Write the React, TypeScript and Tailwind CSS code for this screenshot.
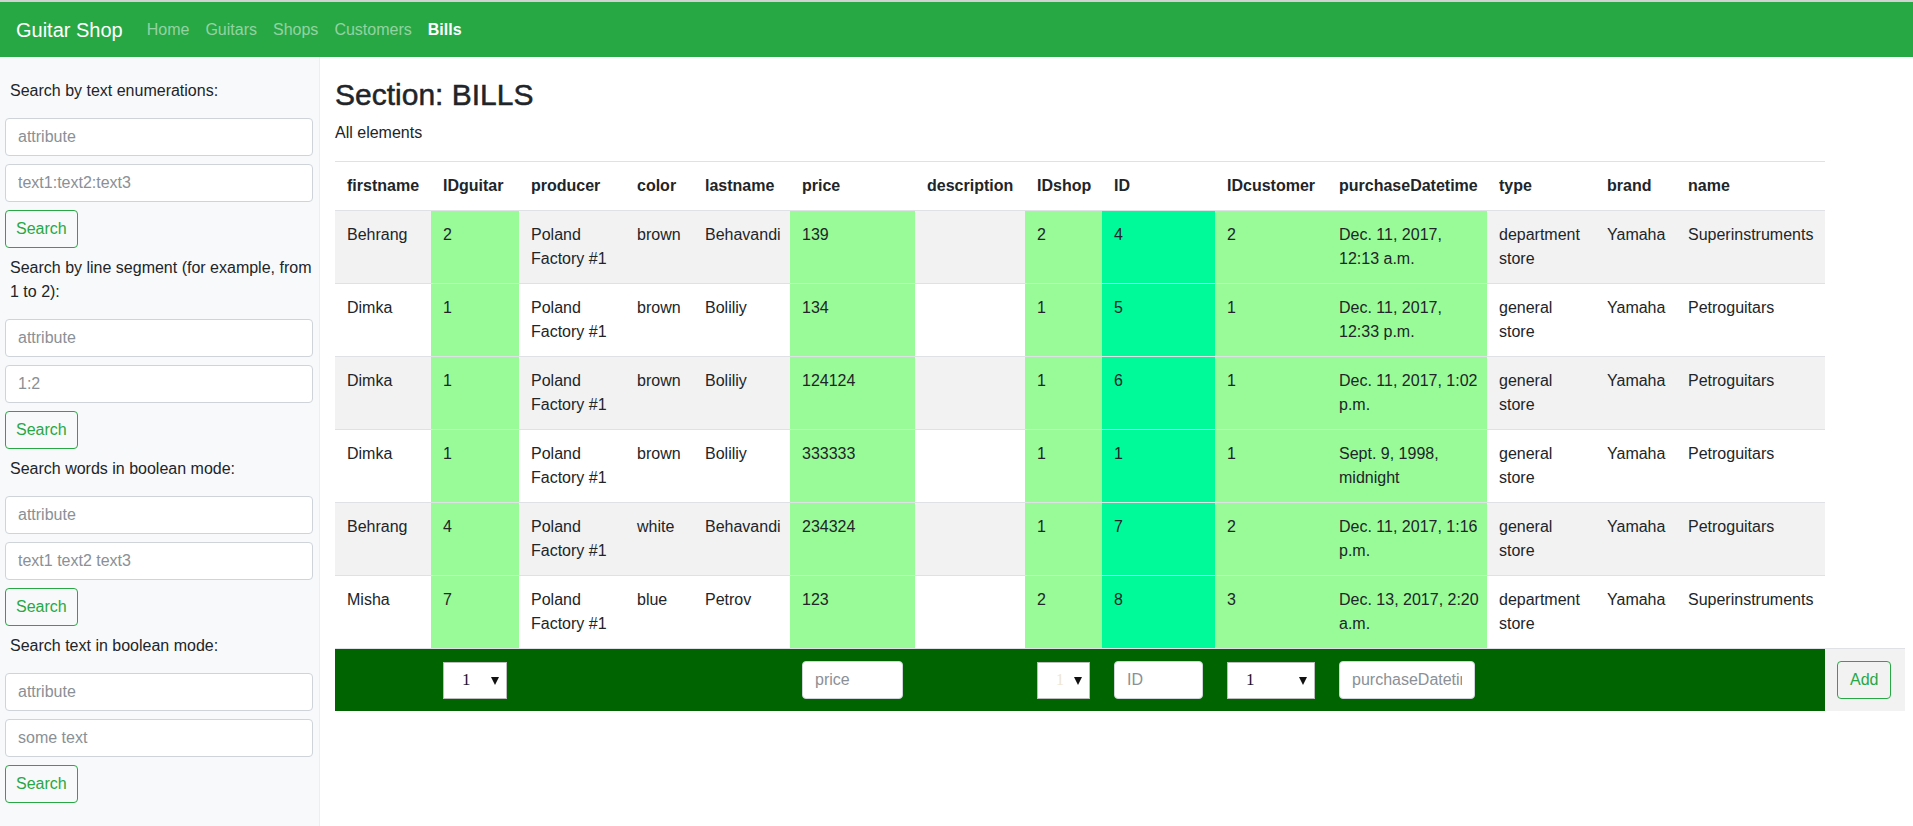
import React from "react";

const headers = [
  "firstname",
  "IDguitar",
  "producer",
  "color",
  "lastname",
  "price",
  "description",
  "IDshop",
  "ID",
  "IDcustomer",
  "purchaseDatetime",
  "type",
  "brand",
  "name",
];

const colWidths = [96, 88, 106, 68, 97, 125, 110, 77, 113, 112, 160, 108, 81, 149, 80];

const cellBg: Record<number, string> = {
  1: "bg-[#98fb98]",
  5: "bg-[#98fb98]",
  7: "bg-[#98fb98]",
  8: "bg-[#00fa9a]",
  9: "bg-[#98fb98]",
  10: "bg-[#98fb98]",
};

type Cell = string[];

const rows: Cell[][] = [
  [["Behrang"], ["2"], ["Poland", "Factory #1"], ["brown"], ["Behavandi"], ["139"], [], ["2"], ["4"], ["2"], ["Dec. 11, 2017,", "12:13 a.m."], ["department", "store"], ["Yamaha"], ["Superinstruments"]],
  [["Dimka"], ["1"], ["Poland", "Factory #1"], ["brown"], ["Boliliy"], ["134"], [], ["1"], ["5"], ["1"], ["Dec. 11, 2017,", "12:33 p.m."], ["general", "store"], ["Yamaha"], ["Petroguitars"]],
  [["Dimka"], ["1"], ["Poland", "Factory #1"], ["brown"], ["Boliliy"], ["124124"], [], ["1"], ["6"], ["1"], ["Dec. 11, 2017, 1:02", "p.m."], ["general", "store"], ["Yamaha"], ["Petroguitars"]],
  [["Dimka"], ["1"], ["Poland", "Factory #1"], ["brown"], ["Boliliy"], ["333333"], [], ["1"], ["1"], ["1"], ["Sept. 9, 1998,", "midnight"], ["general", "store"], ["Yamaha"], ["Petroguitars"]],
  [["Behrang"], ["4"], ["Poland", "Factory #1"], ["white"], ["Behavandi"], ["234324"], [], ["1"], ["7"], ["2"], ["Dec. 11, 2017, 1:16", "p.m."], ["general", "store"], ["Yamaha"], ["Petroguitars"]],
  [["Misha"], ["7"], ["Poland", "Factory #1"], ["blue"], ["Petrov"], ["123"], [], ["2"], ["8"], ["3"], ["Dec. 13, 2017, 2:20", "a.m."], ["department", "store"], ["Yamaha"], ["Superinstruments"]],
];

function SideInput({ placeholder }: { placeholder: string }) {
  return (
    <input
      placeholder={placeholder}
      className="block w-full h-[38px] mb-2 rounded-[4px] border border-[#ced4da] bg-white px-3 text-[16px] leading-6 text-[#495057] placeholder:text-[#8a9096] outline-none"
    />
  );
}

function SearchButton() {
  return (
    <button className="block h-[38px] mb-2 px-[10px] rounded-[4px] border border-[#28a745] text-[#28a745] text-[16px] leading-6 bg-transparent">
      Search
    </button>
  );
}

function Arrow() {
  return (
    <svg width="8" height="9" viewBox="0 0 8 9" className="shrink-0">
      <polygon points="0,1 8,1 4,9" fill="#111" />
    </svg>
  );
}

function FakeSelect({ faint }: { faint?: boolean }) {
  return (
    <div className="flex h-[37px] w-full items-center justify-between border border-[#bdbdbd] bg-white pl-[18px] pr-[7px] overflow-hidden">
      <span
        className={
          faint
            ? "font-['Liberation_Serif',serif] text-[16px] text-[#efe6d2]"
            : "font-['Liberation_Serif',serif] text-[17px] text-[#1b1530]"
        }
      >
        1
      </span>
      <Arrow />
    </div>
  );
}

function FormInput({ placeholder }: { placeholder: string }) {
  return (
    <input
      placeholder={placeholder}
      className="block w-full h-[38px] rounded-[4px] border border-[#ced4da] bg-white px-3 text-[16px] leading-6 placeholder:text-[#8a9096] outline-none"
    />
  );
}

export default function App() {
  return (
    <div className="min-h-screen bg-white font-['Liberation_Sans',Arial,sans-serif] text-[16px] leading-6 text-[#212529]">
      <div className="h-[2px] bg-[#d2d2d2]" />
      <nav className="flex h-[55px] items-center bg-[#28a745] px-4">
        <span className="mr-4 text-[20px] leading-[30px] text-white">Guitar Shop</span>
        <div className="flex items-center">
          <span className="px-2 text-[rgba(255,255,255,0.5)]">Home</span>
          <span className="px-2 text-[rgba(255,255,255,0.5)]">Guitars</span>
          <span className="px-2 text-[rgba(255,255,255,0.5)]">Shops</span>
          <span className="px-2 text-[rgba(255,255,255,0.5)]">Customers</span>
          <span className="px-2 font-bold text-white">Bills</span>
        </div>
      </nav>

      <div className="flex min-h-[769px]">
        <aside className="w-[320px] shrink-0 border-r border-[#eceeef] bg-[#f8f9fa] pl-[5px] pr-[6px] pt-[22px]">
          <p className="mb-[15px] pl-[5px]">Search by text enumerations:</p>
          <SideInput placeholder="attribute" />
          <SideInput placeholder="text1:text2:text3" />
          <SearchButton />

          <p className="mb-[15px] pl-[5px] whitespace-nowrap">
            Search by line segment (for example, from
            <br />1 to 2):
          </p>
          <SideInput placeholder="attribute" />
          <SideInput placeholder="1:2" />
          <SearchButton />

          <p className="mb-[15px] pl-[5px]">Search words in boolean mode:</p>
          <SideInput placeholder="attribute" />
          <SideInput placeholder="text1 text2 text3" />
          <SearchButton />

          <p className="mb-[15px] pl-[5px]">Search text in boolean mode:</p>
          <SideInput placeholder="attribute" />
          <SideInput placeholder="some text" />
          <SearchButton />
        </aside>

        <main className="min-w-0 flex-1 pl-[15px] pt-[20px]">
          <h2 className="mb-2 text-[30px] leading-[36px] text-[#212529] [-webkit-text-stroke:0.5px_#212529]">
            Section: BILLS
          </h2>
          <p className="mb-4">All elements</p>

          <table className="w-[1570px] table-fixed border-collapse">
            <colgroup>
              {colWidths.map((w, i) => (
                <col key={i} style={{ width: w }} />
              ))}
            </colgroup>
            <thead>
              <tr>
                {headers.map((h) => (
                  <th
                    key={h}
                    className="border-t border-[#dee2e6] px-3 py-3 text-left align-bottom font-bold whitespace-nowrap"
                  >
                    {h}
                  </th>
                ))}
              </tr>
            </thead>
            <tbody>
              {rows.map((row, ri) => (
                <tr key={ri} className={ri % 2 === 0 ? "bg-[#f2f2f2]" : "bg-white"}>
                  {row.map((cell, ci) => (
                    <td
                      key={ci}
                      className={`border-t border-[#dee2e6] px-3 py-3 align-top ${cellBg[ci] ?? ""}`}
                    >
                      <div className="h-[48px]">
                        {cell.map((line, li) => (
                          <span key={li} className="block whitespace-nowrap">
                            {line}
                          </span>
                        ))}
                      </div>
                    </td>
                  ))}
                </tr>
              ))}
              <tr className="bg-[#f2f2f2]">
                <td className="border-t border-[#dee2e6] bg-[#006400] px-3 py-3" />
                <td className="border-t border-[#dee2e6] bg-[#006400] px-3 py-3">
                  <FakeSelect />
                </td>
                <td className="border-t border-[#dee2e6] bg-[#006400] px-3 py-3" />
                <td className="border-t border-[#dee2e6] bg-[#006400] px-3 py-3" />
                <td className="border-t border-[#dee2e6] bg-[#006400] px-3 py-3" />
                <td className="border-t border-[#dee2e6] bg-[#006400] px-3 py-3">
                  <FormInput placeholder="price" />
                </td>
                <td className="border-t border-[#dee2e6] bg-[#006400] px-3 py-3" />
                <td className="border-t border-[#dee2e6] bg-[#006400] px-3 py-3">
                  <FakeSelect faint />
                </td>
                <td className="border-t border-[#dee2e6] bg-[#006400] px-3 py-3">
                  <FormInput placeholder="ID" />
                </td>
                <td className="border-t border-[#dee2e6] bg-[#006400] px-3 py-3">
                  <FakeSelect />
                </td>
                <td className="border-t border-[#dee2e6] bg-[#006400] px-3 py-3">
                  <FormInput placeholder="purchaseDatetime" />
                </td>
                <td className="border-t border-[#dee2e6] bg-[#006400] px-3 py-3" />
                <td className="border-t border-[#dee2e6] bg-[#006400] px-3 py-3" />
                <td className="border-t border-[#dee2e6] bg-[#006400] px-3 py-3" />
                <td className="border-t border-[#dee2e6] bg-[#f2f2f2] px-3 py-3">
                  <button className="block h-[38px] rounded-[4px] border border-[#28a745] bg-transparent px-3 text-[16px] leading-6 text-[#28a745]">
                    Add
                  </button>
                </td>
              </tr>
            </tbody>
          </table>
        </main>
      </div>
    </div>
  );
}
